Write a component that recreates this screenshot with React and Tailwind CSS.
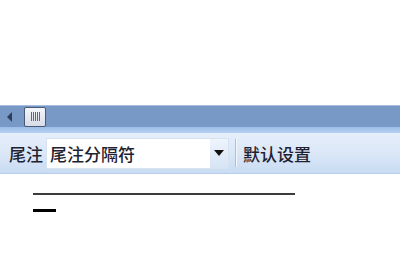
import React from "react";

const font = { fontFamily: '"Noto Sans CJK SC", "Liberation Sans", sans-serif' };

const ScrollBar = () => (
  <div className="h-[22px] bg-[#7898c6] border-t border-[#a6bee0] flex items-center">
    <svg width="14" height="12" viewBox="0 0 14 12" className="ml-[3px]">
      <path d="M9 1 L4 6 L9 11 Z" fill="#2c3e5c" />
    </svg>
    <div className="ml-[7px] w-[22px] h-[20px] bg-gradient-to-b from-[#f4f6fa] to-[#d6dde8] border border-[#4a5a74] rounded-[2px] flex items-center justify-center gap-[1px]">
      <span className="w-px h-[9px] bg-[#606a7a]" />
      <span className="w-px h-[9px] bg-[#606a7a]" />
      <span className="w-px h-[9px] bg-[#606a7a]" />
      <span className="w-px h-[9px] bg-[#606a7a]" />
      <span className="w-px h-[9px] bg-[#606a7a]" />
    </div>
  </div>
);

const Toolbar = () => (
  <div className="h-[41px] bg-gradient-to-b from-[#e6effb] via-[#dbe7f7] to-[#c9dcf3] border-b border-[#b6cdee] flex items-center pl-[9px] text-[17px] font-medium text-[#1e2230]" style={font}>
    <span className="pt-[1px]">尾注</span>
    <div className="ml-[3px] w-[183px] h-[31px] bg-white flex items-center border border-[#d7e2f0]">
      <span className="pl-[3px] pt-[1px] flex-1">尾注分隔符</span>
      <div className="w-[18px] h-full bg-gradient-to-b from-[#eef4fc] to-[#d6e4f6] flex items-center justify-center">
        <svg width="10" height="6" viewBox="0 0 10 6">
          <path d="M0 0 H10 L5 6 Z" fill="#111" />
        </svg>
      </div>
    </div>
    <div className="ml-[6px] w-px h-[28px] bg-[#a9bfdc] shadow-[1px_0_0_#f4f8fd]" />
    <span className="ml-[7px] pt-[1px]">默认设置</span>
  </div>
);

export default function App() {
  return (
    <div className="w-[400px] h-[266px] bg-white overflow-hidden">
      <div className="h-[105px]" />
      <ScrollBar />
      <div className="h-[6px] bg-gradient-to-b from-[#9cbde8] to-[#b6d1f2]" />
      <Toolbar />
      <div className="pl-[33px] pt-[19px]">
        <div className="w-[262px] h-[2px] bg-[#3c3c3c]" />
        <div className="mt-[14px] w-[23px] h-[3px] bg-black" />
      </div>
    </div>
  );
}
